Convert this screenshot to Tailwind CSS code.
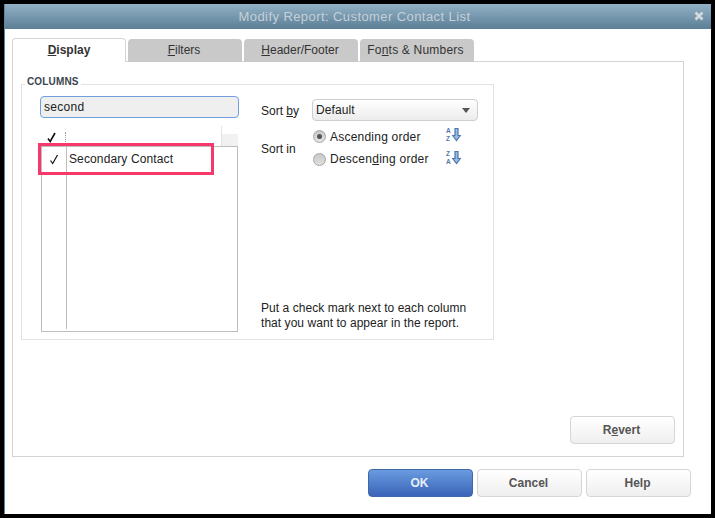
<!DOCTYPE html>
<html lang="en">
<head>
    <meta charset="UTF-8">
    <title>Modify Report</title>
    <script src="https://cdn.jsdelivr.net/npm/@tailwindcss/browser@4"></script>
</head>
<body class="bg-black w-[715px] h-[518px] overflow-hidden p-1 font-['Liberation_Sans',Arial,sans-serif] text-xs text-[#222]">
    <div class="h-[510px] bg-white flex flex-col border-l border-[#5f87a0]">
        <!-- title bar -->
        <div class="h-[25px] shrink-0 pr-[7px] flex items-center justify-center relative bg-gradient-to-b from-[#92b1c6] to-[#5c7f96] text-[#c4d0d8] text-[13px] tracking-[0.42px]">
            <span>Modify Report: Customer Contact List</span>
            <svg class="absolute right-[7px] top-[7px]" width="10" height="10" viewBox="0 0 10 10"><path d="M1.5 1.5l7 7M8.5 1.5l-7 7" stroke="#d5dadd" stroke-width="2.6"/></svg>
        </div>

        <div class="flex-1 flex flex-col pl-[7px] pt-[9px]">
            <!-- tabs -->
            <div class="flex gap-[2px] h-6 relative z-10">
                <div class="w-[114px] h-6 pb-0.5 bg-white border border-b-0 border-[#d4d4d4] rounded-t flex items-center justify-center font-bold text-[#333]"><span><u>D</u>isplay</span></div>
                <div class="w-[114px] h-[23px] mt-px pb-0.5 pr-0.5 bg-[#c9c9c9] rounded-t flex items-center justify-center text-[#333]"><span><u>F</u>ilters</span></div>
                <div class="w-[114px] h-[23px] mt-px pb-0.5 pr-0.5 bg-[#c9c9c9] rounded-t flex items-center justify-center text-[#333]"><span><u>H</u>eader/Footer</span></div>
                <div class="w-[114px] h-[23px] mt-px pb-0.5 pr-[3px] bg-[#c9c9c9] rounded-t flex items-center justify-center text-[#333] tracking-[0.2px]"><span>Fo<u>n</u>ts &amp; Numbers</span></div>
            </div>

            <!-- tab pane -->
            <div class="w-[672px] h-[396px] -mt-px border border-[#d4d4d4] flex flex-col">
                <div class="relative w-[473px] h-[256px] ml-2 mt-[22px] border border-[#e2e2e2] flex pl-[18px] pt-[11px] pb-2">
                    <span class="absolute left-[3px] -top-[10px] bg-white px-[2px] text-[10px] leading-[14px] tracking-[0.15px] font-bold text-[#3c4650]">COLUMNS</span>

                    <div class="w-[199px] shrink-0">
                        <div class="h-[22px] bg-[#efefef] border border-[#6f9fe0] rounded-sm flex items-center px-[3px] tracking-[0.3px]">second</div>
                        <!-- column list -->
                        <div class="relative ml-px mt-2 w-[197px] h-[206px] flex flex-col">
                            <div class="h-5 shrink-0 flex">
                                <div class="w-[25px] flex items-end pl-[5px] pb-[3px]">
                                    <svg width="11" height="11" viewBox="0 0 10 11"><path d="M1.5 6.5l2.2 3L8.5 1" fill="none" stroke="#111" stroke-width="1.6"/></svg>
                                    <span class="ml-[8px] w-px h-2.5 mb-px border-l border-dotted border-[#999]"></span>
                                </div>
                                <div class="w-[156px] border-r border-[#e2e2e2]"></div>
                                <div class="flex-1 mt-2 bg-[#f1f1f1]"></div>
                            </div>
                            <div class="h-[186px] flex border border-[#bdbdbd]">
                                <div class="w-[25px] h-[182px] shrink-0 border-r border-[#bdbdbd] flex justify-center pt-[7px]">
                                    <svg width="10" height="11" viewBox="0 0 10 11"><path d="M1.5 6.5l2.2 3L8.5 1" fill="none" stroke="#111" stroke-width="1.2"/></svg>
                                </div>
                                <div class="pl-[2px] pt-[5px] leading-[14px] tracking-[0.12px]">Secondary Contact</div>
                            </div>
                            <div class="absolute -left-[3px] top-[17px] w-[176px] h-[32px] border-[3px] border-[#f53a6b]"></div>
                        </div>
                    </div>

                    <div class="ml-[22px] w-[217px] pt-[3px] flex flex-col">
                        <div class="flex items-center h-[22px]">
                            <span class="w-[51px] shrink-0 pt-0.5">Sort <u>b</u>y</span>
                            <div class="w-[166px] h-[22px] border border-[#cfcfcf] rounded-sm bg-gradient-to-b from-white to-[#ececec] flex items-center justify-between px-[3px] pr-[7px]">
                                <span class="tracking-[0.1px]">Default</span>
                                <span class="w-0 h-0 border-x-[4.5px] border-x-transparent border-t-[5px] border-t-[#555]"></span>
                            </div>
                        </div>
                        <div class="flex items-center mt-1">
                            <span class="w-[51px] shrink-0 pt-0.5">Sort in</span>
                            <div class="flex-1">
                                <div class="h-[23px] flex items-center">
                                    <span class="ml-px w-[13px] h-[13px] rounded-full border border-[#a5a5a5] bg-gradient-to-b from-[#c8c8c8] to-[#e6e6e6] flex items-center justify-center"><span class="w-[5px] h-[5px] rounded-full bg-[#555]"></span></span>
                                    <span class="ml-1 w-[116px] tracking-[0.22px]">Ascendin<u>g</u> order</span>
                                    <svg class="-mt-1" width="15" height="16" viewBox="0 0 15 16"><text x="0" y="6" font-size="6.5" font-family="Liberation Sans" font-weight="bold" fill="#4f78a8">A</text><text x="0" y="14" font-size="6.5" font-family="Liberation Sans" font-weight="bold" fill="#4f78a8">Z</text><path d="M9 1.5h3v7h2.2l-3.7 5-3.7-5H9z" fill="#9dbce0" stroke="#4a76b0" stroke-width="1.2"/></svg>
                                </div>
                                <div class="h-[23px] flex items-center">
                                    <span class="ml-px w-[13px] h-[13px] rounded-full border border-[#a5a5a5] bg-gradient-to-b from-[#c8c8c8] to-[#e0e0e0]"></span>
                                    <span class="ml-1 w-[116px] tracking-[0.25px] -mt-px">Descen<u>d</u>ing order</span>
                                    <svg class="-mt-1" width="15" height="16" viewBox="0 0 15 16"><text x="0" y="6" font-size="6.5" font-family="Liberation Sans" font-weight="bold" fill="#4f78a8">Z</text><text x="0" y="14" font-size="6.5" font-family="Liberation Sans" font-weight="bold" fill="#4f78a8">A</text><path d="M9 1.5h3v7h2.2l-3.7 5-3.7-5H9z" fill="#9dbce0" stroke="#4a76b0" stroke-width="1.2"/></svg>
                                </div>
                            </div>
                        </div>
                        <p class="mt-auto leading-[15px] tracking-[0.05px] whitespace-nowrap">Put a check mark next to each column<br>that you want to appear in the report.</p>
                    </div>
                </div>

                <div class="mt-auto self-end mr-2 mb-3 w-[105px] h-7 pr-0.5 border border-[#d6d6d6] rounded-sm bg-gradient-to-b from-white to-[#efefef] flex items-center justify-center font-bold text-[#555]"><span>R<u>e</u>vert</span></div>
            </div>

            <!-- footer buttons -->
            <div class="w-[679px] flex justify-end gap-1 mt-3">
                <div class="w-[105px] h-7 pr-0.5 border border-[#3f68a8] rounded-sm bg-gradient-to-b from-[#6a9be0] to-[#3c64b8] flex items-center justify-center font-bold text-[#e8eef8]">OK</div>
                <div class="w-[105px] h-7 pr-0.5 border border-[#d6d6d6] rounded-sm bg-gradient-to-b from-white to-[#efefef] flex items-center justify-center font-bold text-[#555]">Cancel</div>
                <div class="w-[105px] h-7 pr-0.5 border border-[#d6d6d6] rounded-sm bg-gradient-to-b from-white to-[#efefef] flex items-center justify-center font-bold text-[#555]">Help</div>
            </div>
        </div>
    </div>
</body>
</html>
